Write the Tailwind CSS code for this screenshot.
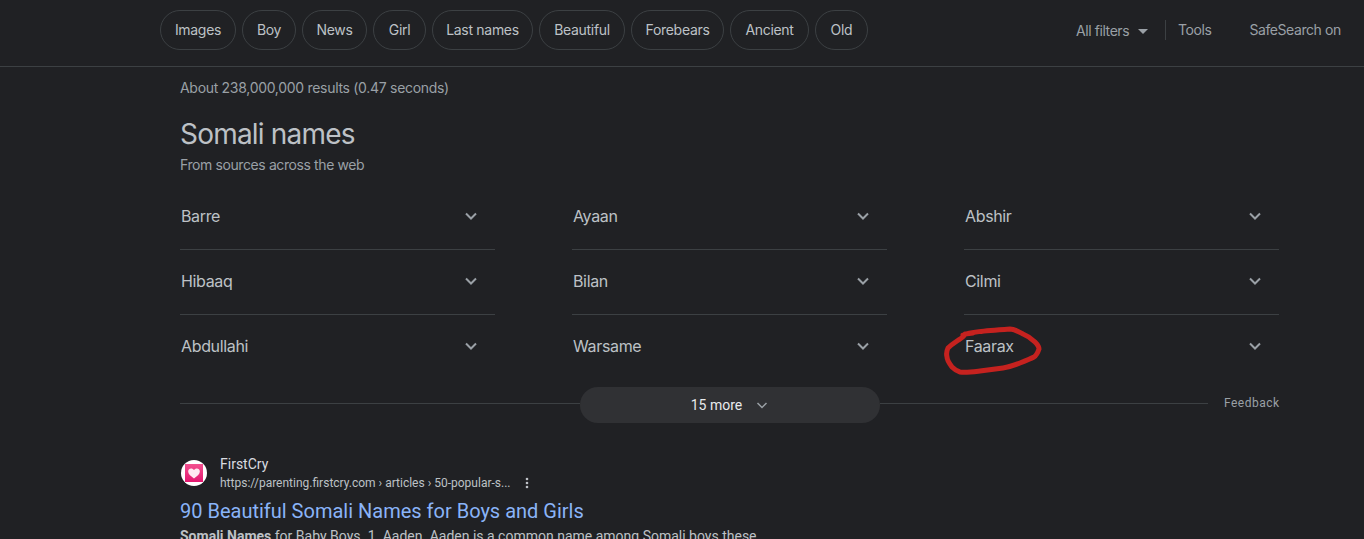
<!DOCTYPE html>
<html lang="en">
<head>
<meta charset="utf-8">
<script src="https://cdn.jsdelivr.net/npm/@tailwindcss/browser@4"></script>
<title>Somali names</title>
</head>
<body class="bg-[#202124] overflow-hidden antialiased font-['Inter','Roboto',sans-serif]">
<div class="w-[1364px] h-[539px] overflow-hidden relative">
  <header class="h-[67px] border-b border-[#3c4043] flex items-start pl-[160px] pt-[10px]">
    <nav class="flex gap-[6px] text-[14px] leading-[40px] tracking-[-0.3px] text-[#bdc1c6]">
      <a class="w-[76px] h-[40px] rounded-full border border-[#3c4043] flex items-center justify-center">Images</a>
      <a class="w-[54px] h-[40px] rounded-full border border-[#3c4043] flex items-center justify-center">Boy</a>
      <a class="w-[65px] h-[40px] rounded-full border border-[#3c4043] flex items-center justify-center">News</a>
      <a class="w-[53px] h-[40px] rounded-full border border-[#3c4043] flex items-center justify-center">Girl</a>
      <a class="w-[101px] h-[40px] rounded-full border border-[#3c4043] flex items-center justify-center">Last names</a>
      <a class="w-[86px] h-[40px] rounded-full border border-[#3c4043] flex items-center justify-center">Beautiful</a>
      <a class="w-[93px] h-[40px] rounded-full border border-[#3c4043] flex items-center justify-center">Forebears</a>
      <a class="w-[79px] h-[40px] rounded-full border border-[#3c4043] flex items-center justify-center">Ancient</a>
      <a class="w-[53px] h-[40px] rounded-full border border-[#3c4043] flex items-center justify-center">Old</a>
    </nav>
    <div class="ml-[208px] flex items-center h-[40px] text-[14px] tracking-[-0.42px] text-[#9aa0a6]">
      <span class="w-[57px]">All filters</span>
      <svg class="w-[10px] h-[5px] ml-[5px] mt-[2px]" viewBox="0 0 10 5"><path d="M0 0h10L5 5z" fill="#9aa0a6"/></svg>
      <span class="ml-[17px] w-px h-[20px] bg-[#3c4043]"></span>
      <span class="ml-[12px] -mt-[2px]">Tools</span>
      <span class="ml-[38px] -mt-[2px]">SafeSearch on</span>
    </div>
  </header>

  <main class="pl-[180px]">
    <p class="pt-[13px] text-[14px] leading-[16px] tracking-[-0.3px] text-[#9aa0a6]">About 238,000,000 results (0.47 seconds)</p>
    <h2 class="mt-[22px] text-[28px] leading-[32px] tracking-[-0.8px] text-[#bdc1c6]">Somali names</h2>
    <p class="mt-[6px] text-[14px] leading-[18px] tracking-[-0.4px] text-[#9aa0a6]">From sources across the web</p>

    <div class="mt-[11px] grid grid-cols-[315px_315px_315px] gap-x-[77px] text-[16px] tracking-[-0.35px] text-[#bdc1c6]">
      <div class="h-[65px] border-b border-[#3c4043] flex items-center justify-between pl-px pr-[16px] pb-[2px]"><span>Barre</span><svg class="w-[16px] h-[16px] text-[#9aa0a6]" viewBox="0 0 16 16" fill="none" stroke="currentColor" stroke-width="2"><path d="M3 5.5l5 5 5-5"/></svg></div>
      <div class="h-[65px] border-b border-[#3c4043] flex items-center justify-between pl-px pr-[16px] pb-[2px]"><span>Ayaan</span><svg class="w-[16px] h-[16px] text-[#9aa0a6]" viewBox="0 0 16 16" fill="none" stroke="currentColor" stroke-width="2"><path d="M3 5.5l5 5 5-5"/></svg></div>
      <div class="h-[65px] border-b border-[#3c4043] flex items-center justify-between pl-px pr-[16px] pb-[2px]"><span>Abshir</span><svg class="w-[16px] h-[16px] text-[#9aa0a6]" viewBox="0 0 16 16" fill="none" stroke="currentColor" stroke-width="2"><path d="M3 5.5l5 5 5-5"/></svg></div>
      <div class="h-[65px] border-b border-[#3c4043] flex items-center justify-between pl-px pr-[16px] pb-[2px]"><span>Hibaaq</span><svg class="w-[16px] h-[16px] text-[#9aa0a6]" viewBox="0 0 16 16" fill="none" stroke="currentColor" stroke-width="2"><path d="M3 5.5l5 5 5-5"/></svg></div>
      <div class="h-[65px] border-b border-[#3c4043] flex items-center justify-between pl-px pr-[16px] pb-[2px]"><span>Bilan</span><svg class="w-[16px] h-[16px] text-[#9aa0a6]" viewBox="0 0 16 16" fill="none" stroke="currentColor" stroke-width="2"><path d="M3 5.5l5 5 5-5"/></svg></div>
      <div class="h-[65px] border-b border-[#3c4043] flex items-center justify-between pl-px pr-[16px] pb-[2px]"><span>Cilmi</span><svg class="w-[16px] h-[16px] text-[#9aa0a6]" viewBox="0 0 16 16" fill="none" stroke="currentColor" stroke-width="2"><path d="M3 5.5l5 5 5-5"/></svg></div>
      <div class="h-[65px] border-b border-transparent flex items-center justify-between pl-px pr-[16px] pb-[2px]"><span>Abdullahi</span><svg class="w-[16px] h-[16px] text-[#9aa0a6]" viewBox="0 0 16 16" fill="none" stroke="currentColor" stroke-width="2"><path d="M3 5.5l5 5 5-5"/></svg></div>
      <div class="h-[65px] border-b border-transparent flex items-center justify-between pl-px pr-[16px] pb-[2px]"><span>Warsame</span><svg class="w-[16px] h-[16px] text-[#9aa0a6]" viewBox="0 0 16 16" fill="none" stroke="currentColor" stroke-width="2"><path d="M3 5.5l5 5 5-5"/></svg></div>
      <div class="h-[65px] border-b border-transparent flex items-center justify-between pl-px pr-[16px] pb-[2px]"><span>Faarax</span><svg class="w-[16px] h-[16px] text-[#9aa0a6]" viewBox="0 0 16 16" fill="none" stroke="currentColor" stroke-width="2"><path d="M3 5.5l5 5 5-5"/></svg></div>
    </div>

    <div class="mt-[7px] w-[1100px] h-[36px] flex items-center">
      <span class="w-[400px] h-px bg-[#3c4043] -mt-[3px]"></span>
      <button class="w-[300px] h-[36px] rounded-[18px] bg-[#303134] flex items-center justify-center font-['Roboto',sans-serif] text-[14px] text-[#e8eaed]">15 more<svg class="ml-[13px] w-[14px] h-[14px]" viewBox="0 0 14 14" fill="none" stroke="#9aa0a6" stroke-width="1.5"><path d="M2.5 5l4.500 4.500L11.500 5"/></svg></button>
      <span class="w-[328px] h-px bg-[#3c4043] -mt-[3px]"></span>
      <span class="ml-[16px] -mt-[4px] font-['Roboto',sans-serif] text-[12px] tracking-[0.5px] text-[#9aa0a6]">Feedback</span>
    </div>

    <section class="mt-[32px] font-['Roboto',sans-serif]">
      <div class="flex items-center h-[37px]">
        <div class="ml-px mb-[2px] w-[26px] h-[26px] rounded-full bg-white flex items-center justify-center">
          <svg class="w-[18px] h-[18px]" viewBox="0 0 20 20"><defs><linearGradient id="g" x1="0" y1="0" x2="0" y2="1"><stop offset="0" stop-color="#f2508f"/><stop offset="1" stop-color="#e3176f"/></linearGradient></defs><rect width="20" height="20" fill="url(#g)"/><path d="M10 16C6 13 3.500 10.800 3.500 8.200 3.500 6.400 5 5 6.800 5c1.300 0 2.500.7 3.200 1.800C10.700 5.700 11.900 5 13.200 5 15 5 16.500 6.400 16.500 8.200c0 2.600-2.500 4.800-6.500 7.800z" fill="#ffe9f1"/></svg>
        </div>
        <div class="ml-[13px]">
          <div class="text-[14px] leading-[18px] text-[#dadce0]">FirstCry</div>
          <div class="mt-px flex items-center text-[12px] leading-[18px] text-[#bdc1c6]">https://parenting.firstcry.com › articles › 50-popular-s...
            <svg class="ml-[15px] w-[4px] h-[12px]" viewBox="0 0 4 12" fill="#bdc1c6"><circle cx="2" cy="2" r="1.300"/><circle cx="2" cy="6" r="1.300"/><circle cx="2" cy="10" r="1.300"/></svg>
          </div>
        </div>
      </div>
      <h3 class="mt-[6px] text-[20px] leading-[26px] text-[#8ab4f8]">90 Beautiful Somali Names for Boys and Girls</h3>
      <p class="mt-px text-[14px] leading-[22px] text-[#bdc1c6] whitespace-nowrap"><b class="font-bold">Somali Names</b> for Baby Boys. 1. Aaden. Aaden is a common name among Somali boys these</p>
    </section>
  </main>

  <svg class="absolute left-[940px] top-[320px] w-[110px] h-[60px]" viewBox="0 0 110 60" fill="none" stroke="#c5221f" stroke-width="5" stroke-linecap="round" stroke-linejoin="round"><path d="M23 15C30 12 43 11 70 9C75 9 79 12 83 14C88 16 92 19 95 22C98 25 99 27 99 29C98 32 97 35 94 37C90 39 85 41 80 43C75 45 70 47 63 48C55 49 48 50 40 51C32 52 25 53 20 52C16 51 14 49 12 47C9 43 7 40 7 37C6 33 7 30 8 28C11 25 14 23 17 21C20 19 24 17 25 14L33 13"/></svg>
</div>
</body>
</html>
